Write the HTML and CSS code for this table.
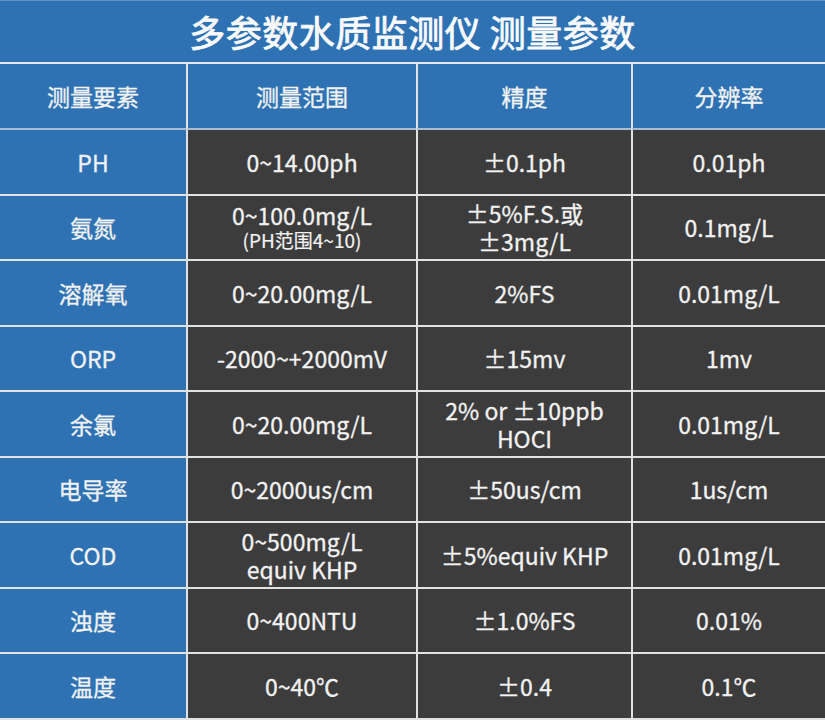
FILE: index.html
```html
<!DOCTYPE html>
<html lang="zh-CN">
<head>
<meta charset="utf-8">
<title>多参数水质监测仪 测量参数</title>
<link rel="stylesheet" href="styles.css">
</head>
<body>
<div class="sheet">
  <div class="title">多参数水质监测仪 测量参数</div>

  <div class="cell head c1">测量要素</div>
  <div class="cell head">测量范围</div>
  <div class="cell head">精度</div>
  <div class="cell head">分辨率</div>

  <div class="cell c1">PH</div>
  <div class="cell dark">0~14.00ph</div>
  <div class="cell dark">±0.1ph</div>
  <div class="cell dark">0.01ph</div>

  <div class="cell c1">氨氮</div>
  <div class="cell dark"><span class="l1">0~100.0mg/L</span><span class="small">(PH范围4~10)</span></div>
  <div class="cell dark two"><span>±5%F.S.或</span><span>±3mg/L</span></div>
  <div class="cell dark">0.1mg/L</div>

  <div class="cell c1">溶解氧</div>
  <div class="cell dark">0~20.00mg/L</div>
  <div class="cell dark">2%FS</div>
  <div class="cell dark">0.01mg/L</div>

  <div class="cell c1">ORP</div>
  <div class="cell dark">-2000~+2000mV</div>
  <div class="cell dark">±15mv</div>
  <div class="cell dark">1mv</div>

  <div class="cell c1">余氯</div>
  <div class="cell dark">0~20.00mg/L</div>
  <div class="cell dark two"><span>2% or ±10ppb</span><span>HOCI</span></div>
  <div class="cell dark">0.01mg/L</div>

  <div class="cell c1">电导率</div>
  <div class="cell dark">0~2000us/cm</div>
  <div class="cell dark">±50us/cm</div>
  <div class="cell dark">1us/cm</div>

  <div class="cell c1">COD</div>
  <div class="cell dark two"><span>0~500mg/L</span><span>equiv KHP</span></div>
  <div class="cell dark">±5%equiv KHP</div>
  <div class="cell dark">0.01mg/L</div>

  <div class="cell c1">浊度</div>
  <div class="cell dark">0~400NTU</div>
  <div class="cell dark">±1.0%FS</div>
  <div class="cell dark">0.01%</div>

  <div class="cell c1">温度</div>
  <div class="cell dark">0~40℃</div>
  <div class="cell dark">±0.4</div>
  <div class="cell dark">0.1℃</div>
</div>
</body>
</html>
```

FILE: styles.css
```css
* { box-sizing: border-box; }

html, body {
  margin: 0;
  padding: 0;
  background: #3c3c3c;
}

body {
  font-family: "Noto Sans CJK SC", "Noto Sans", sans-serif;
  color: #f2f2f2;
  width: 825px;
  height: 720px;
  overflow: hidden;
}

.sheet {
  display: grid;
  grid-template-columns: 186px 230px 215px 194px;
  grid-template-rows: 64px 66px repeat(9, 65.5px);
}

.title {
  grid-column: 1 / -1;
  background: #2e72b4;
  border-top: 1px solid #5e93c8;
  border-bottom: 2px solid #e4e8ec;
  display: flex;
  align-items: center;
  justify-content: center;
  font-size: 36px;
  font-weight: 400;
  -webkit-text-stroke: 0.8px #fafafa;
  color: #fafafa;
  padding-bottom: 2px;
  letter-spacing: 0.5px;
}

.cell {
  display: flex;
  flex-direction: column;
  align-items: center;
  justify-content: center;
  font-size: 23px;
  font-weight: 400;
  line-height: 28px;
  border-bottom: 2px solid #e2e2e2;
  border-left: 2px solid #e2e2e2;
  text-align: center;
  white-space: nowrap;
  -webkit-text-stroke: 0.3px #f2f2f2;
}

.c1 {
  border-left: none;
  background: #2e72b4;
}

.head {
  background: #2e72b4;
  border-bottom-color: #a9bed4;
  font-size: 23px;
}

.dark {
  background: #3c3c3c;
}

.two span {
  display: block;
}

.l1 {
  line-height: 26px;
}

.small {
  font-size: 19px;
  line-height: 24px;
  -webkit-text-stroke: 0.2px #f2f2f2;
}
```
